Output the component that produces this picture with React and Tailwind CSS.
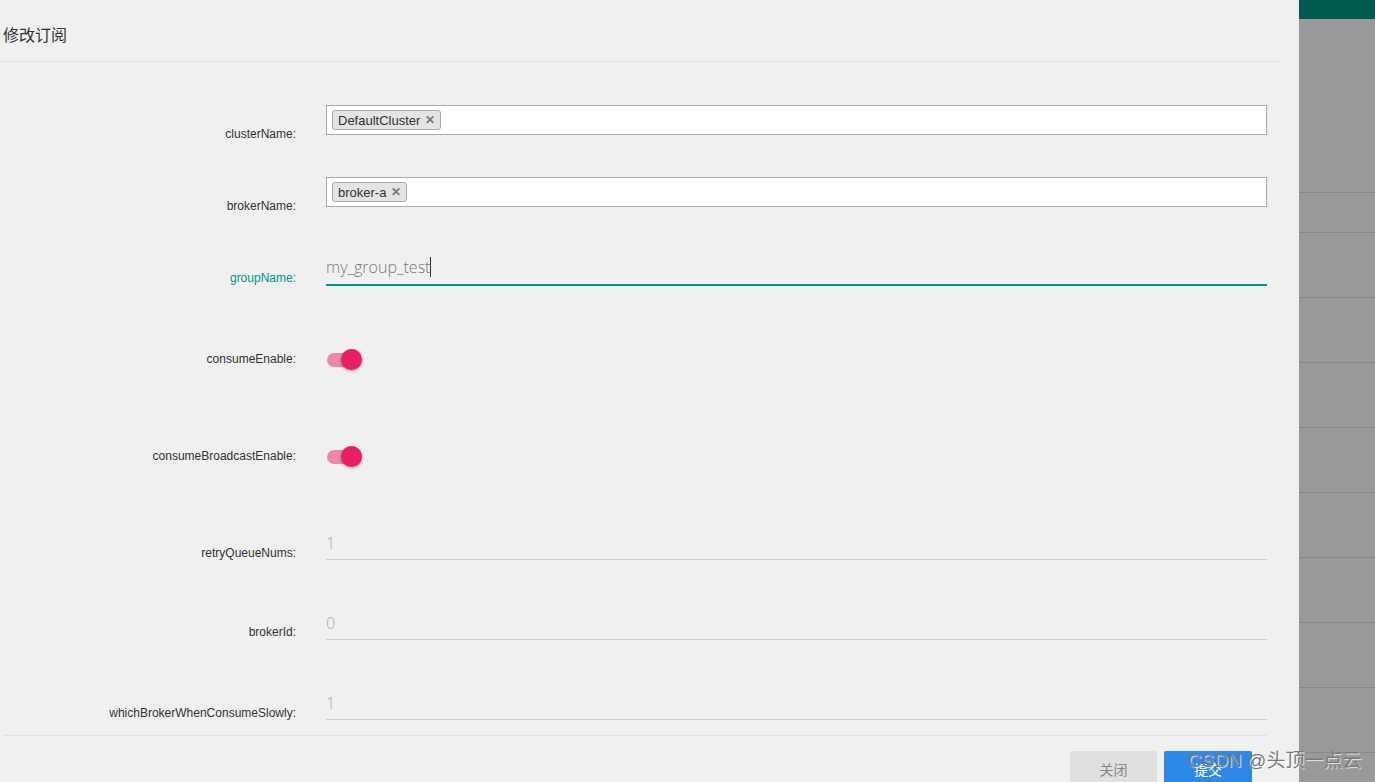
import React from 'react';

const Label = ({ children, pt, active }) => (
  <div
    className={`w-[296px] shrink-0 text-right text-[12px] leading-4 ${active ? 'text-[#009688]' : 'text-[#333]'}`}
    style={{ paddingTop: pt }}
  >
    {children}
  </div>
);

const Tag = ({ text }) => (
  <span className="inline-flex items-center h-[20px] px-[5px] border border-[#aaa] rounded-[3px] bg-[#e4e4e4] text-[13px] text-[#333] leading-none">
    {text}
    <span className="ml-[5px] text-[12px] font-bold text-[#777]">✕</span>
  </span>
);

const Toggle = () => (
  <div className="relative w-[36px] h-[21px]">
    <div className="absolute left-[1px] top-[4px] w-[30px] h-[14px] rounded-full bg-[#ee87aa]" />
    <div className="absolute right-0 top-0 w-[21px] h-[21px] rounded-full bg-[#e91e63] shadow-[0_1px_3px_rgba(0,0,0,0.35)]" />
  </div>
);

const NumInput = ({ value }) => (
  <div className="flex-1 h-[35px] border-b border-[#d0d0d0] flex items-center pt-[1px]">
    <span className="text-[16px] font-light text-[#aaa] font-['Open_Sans',sans-serif]">{value}</span>
  </div>
);

export default function App() {
  const rows = [192, 232, 297, 362, 427, 492, 557, 622, 687, 752];
  return (
    <div className="relative flex w-[1375px] h-[782px] overflow-hidden font-['Liberation_Sans',Arial,'Noto_Sans_CJK_SC',sans-serif]">
      {/* modal */}
      <div className="w-[1299px] shrink-0 h-full bg-[#f0f0f0]">
        <div className="w-[1282px] h-[62px] border-b border-[#e2e2e2] pl-[3px] pt-[23px]">
          <span className="text-[16px] text-[#333] leading-[22px] font-['Noto_Sans_CJK_SC',sans-serif]">修改订阅</span>
        </div>

        <div className="pr-[32px] flex flex-col">
          {/* clusterName */}
          <div className="flex h-[37px] mt-[43px]">
            <Label pt={21}>clusterName:</Label>
            <div className="ml-[30px] flex-1 h-[30px] bg-white border border-[#aaa] flex items-center pl-[5px]">
              <Tag text="DefaultCluster" />
            </div>
          </div>

          {/* brokerName */}
          <div className="flex h-[37px] mt-[35px]">
            <Label pt={21}>brokerName:</Label>
            <div className="ml-[30px] flex-1 h-[30px] bg-white border border-[#aaa] flex items-center pl-[5px]">
              <Tag text="broker-a" />
            </div>
          </div>

          {/* groupName */}
          <div className="flex h-[36px] mt-[36px]">
            <Label pt={20} active>groupName:</Label>
            <div className="ml-[30px] flex-1 h-[36px] border-b-2 border-[#009688] flex items-center">
              <span className="text-[16px] font-light text-[#777] font-['Open_Sans',sans-serif]">my_group_test</span>
              <span className="w-px h-[20px] bg-[#333]" />
            </div>
          </div>

          {/* consumeEnable */}
          <div className="flex h-[21px] mt-[63px]">
            <Label pt={2}>consumeEnable:</Label>
            <div className="ml-[30px]">
              <Toggle />
            </div>
          </div>

          {/* consumeBroadcastEnable */}
          <div className="flex h-[21px] mt-[76px]">
            <Label pt={2}>consumeBroadcastEnable:</Label>
            <div className="ml-[30px]">
              <Toggle />
            </div>
          </div>

          {/* retryQueueNums */}
          <div className="flex h-[35px] mt-[58px]">
            <Label pt={20}>retryQueueNums:</Label>
            <div className="ml-[30px] flex-1 flex">
              <NumInput value="1" />
            </div>
          </div>

          {/* brokerId */}
          <div className="flex h-[35px] mt-[45px]">
            <Label pt={19}>brokerId:</Label>
            <div className="ml-[30px] flex-1 flex">
              <NumInput value="0" />
            </div>
          </div>

          {/* whichBrokerWhenConsumeSlowly */}
          <div className="flex h-[35px] mt-[45px]">
            <Label pt={20}>whichBrokerWhenConsumeSlowly:</Label>
            <div className="ml-[30px] flex-1 flex">
              <NumInput value="1" />
            </div>
          </div>
        </div>

        {/* footer */}
        <div className="ml-[3px] w-[1264px] mt-[15px] border-t border-[#e2e2e2]" />
        <div className="flex justify-end gap-[7px] w-[1252px] mt-[15px]">
          <button className="w-[87px] h-[36px] rounded-[2px] bg-[#e0e0e0] text-[14px] text-[#888] font-['Noto_Sans_CJK_SC',sans-serif]">关闭</button>
          <button className="w-[88px] h-[36px] rounded-[2px] bg-[#2e88e8] text-[14px] text-white font-['Noto_Sans_CJK_SC',sans-serif]">提交</button>
        </div>
      </div>

      {/* backdrop over page */}
      <div className="flex-1 h-full bg-[#999] flex flex-col">
        <div className="h-[19px] shrink-0 bg-[#005a50]" />
        <div className="h-[173px] shrink-0" />
        {rows.slice(1).map((y, i) => (
          <div key={y} className="shrink-0 border-t border-[#888]" style={{ height: y - rows[i] }} />
        ))}
        <div className="flex-1 border-t border-[#888]" />
      </div>

      {/* watermark */}
      <div className="absolute left-[1188px] top-[748px] text-[19px] leading-[26px] text-[#7a7a7a] [text-shadow:1px_1px_1px_rgba(255,255,255,0.8)] font-['Liberation_Sans','Noto_Sans_CJK_SC',sans-serif] whitespace-nowrap">
        CSDN @头顶一点云
      </div>
    </div>
  );
}
